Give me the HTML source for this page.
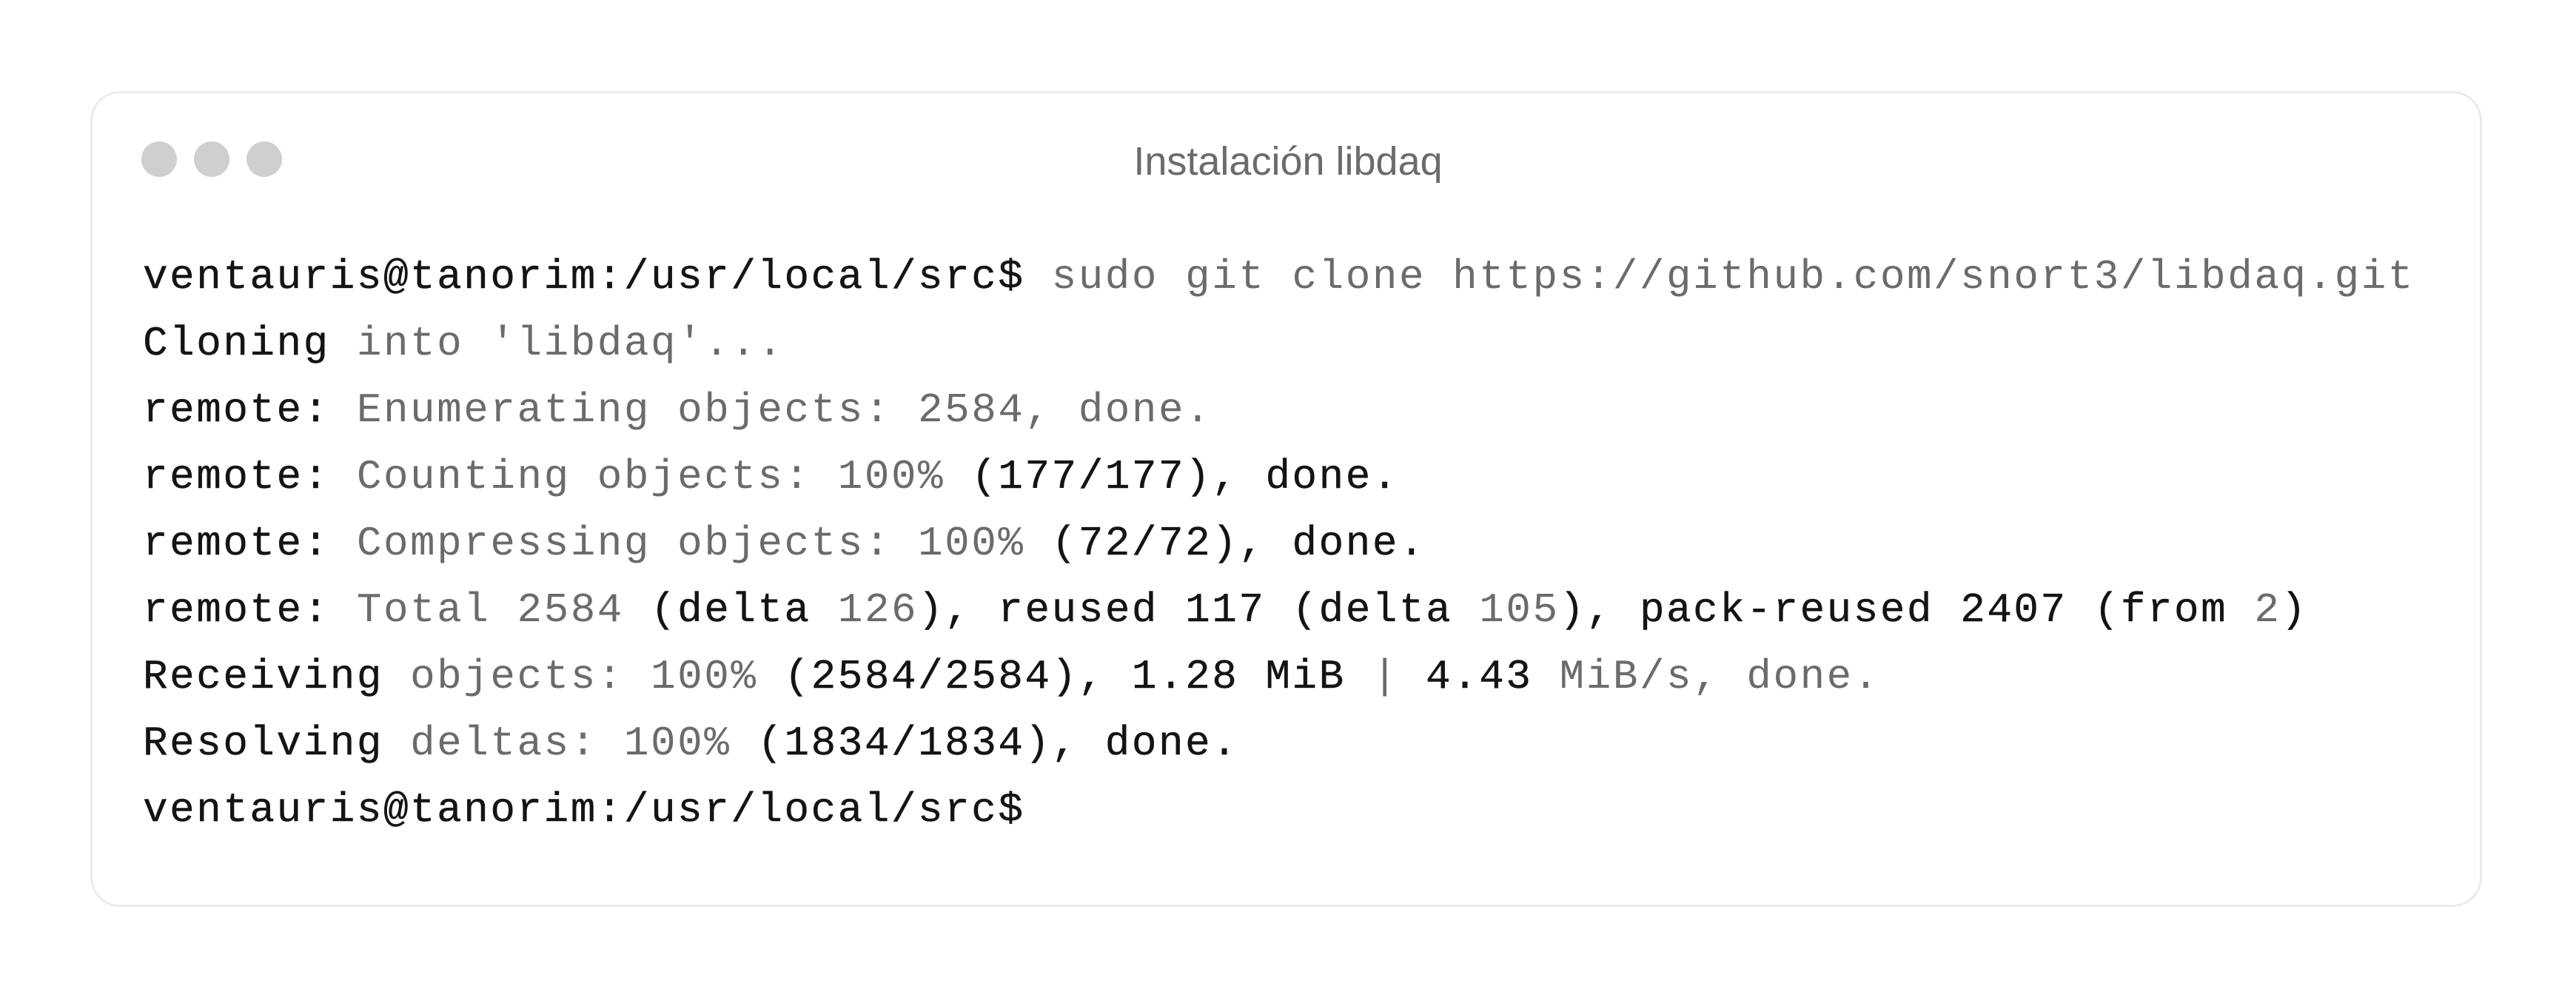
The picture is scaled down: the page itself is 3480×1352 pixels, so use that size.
<!DOCTYPE html>
<html><head><meta charset="utf-8"><style>
html,body{margin:0;padding:0;background:#fff;width:3480px;height:1352px;overflow:hidden}
.card{position:absolute;left:122px;top:123px;width:3231px;height:1102px;box-sizing:border-box;border:3px solid #ebebeb;border-radius:40px;background:#fff}
.dot{position:absolute;top:191px;width:48px;height:48px;border-radius:50%;background:#cfcfcf}
.title{position:absolute;left:0;width:3480px;top:186px;text-align:center;font:54px "Liberation Sans",sans-serif;color:#6b6b6b;line-height:64px}
.term{position:absolute;left:193px;top:329px;font-family:"Liberation Mono",monospace;font-size:56px;letter-spacing:2.5px;line-height:90px;color:#141414;white-space:pre;-webkit-text-stroke:0.4px #141414}
.g{color:#6b6b6b;-webkit-text-stroke:0}
</style></head><body>
<div class="card"></div>
<div class="dot" style="left:191px"></div>
<div class="dot" style="left:262px"></div>
<div class="dot" style="left:333px"></div>
<div class="title">Instalación libdaq</div>
<div class="term">ventauris@tanorim:/usr/local/src$ <span class="g">sudo git clone https://github.com/snort3/libdaq.git</span>
Cloning <span class="g">into 'libdaq'...</span>
remote: <span class="g">Enumerating objects: 2584, done.</span>
remote: <span class="g">Counting objects: 100%</span> (177/177), done.
remote: <span class="g">Compressing objects: 100%</span> (72/72), done.
remote: <span class="g">Total 2584</span> (delta <span class="g">126</span>), reused 117 (delta <span class="g">105</span>), pack-reused 2407 (from <span class="g">2</span>)
Receiving <span class="g">objects: 100%</span> (2584/2584), 1.28 MiB <span class="g">|</span> 4.43 <span class="g">MiB/s, done.</span>
Resolving <span class="g">deltas: 100%</span> (1834/1834), done.
ventauris@tanorim:/usr/local/src$</div>
</body></html>
